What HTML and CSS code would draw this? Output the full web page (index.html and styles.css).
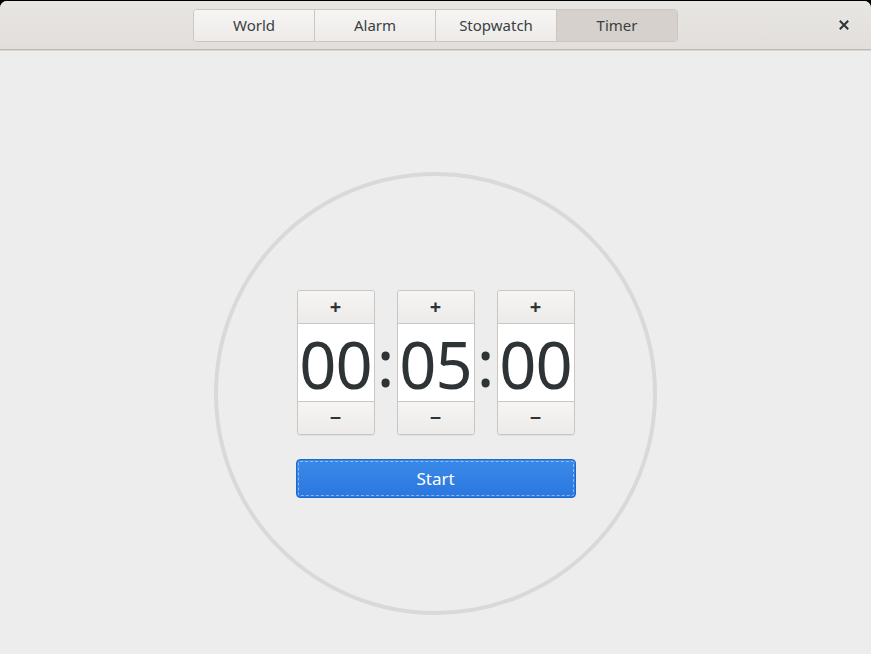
FILE: index.html
```html
<!DOCTYPE html>
<html lang="en">
<head>
  <meta charset="UTF-8" />
  <meta name="viewport" content="width=device-width, initial-scale=1.0"/>
  <title>Clocks - Timer</title>
  <link rel="stylesheet" href="styles.css">
</head>
<body>
  <div class="window">
    <header class="headerbar">
      <div></div>
      <nav class="tabs">
        <a class="tab" href="#world">World</a>
        <a class="tab" href="#alarm">Alarm</a>
        <a class="tab" href="#stopwatch">Stopwatch</a>
        <a class="tab active" href="#timer">Timer</a>
      </nav>
      <div class="close-wrap">
        <button class="close" aria-label="Close">
          <svg width="10" height="10" viewBox="0 0 10 10">
            <path d="M1.5 1.5 L8.5 8.5 M8.5 1.5 L1.5 8.5" stroke="#2e3436" stroke-width="2" stroke-linecap="square"/>
          </svg>
        </button>
      </div>
    </header>

    <main class="content">
      <div class="ring">
        <div class="time">
          <div class="spin">
            <button class="spin-btn up">+</button>
            <div class="spin-value"><span>00</span></div>
            <button class="spin-btn down">&minus;</button>
          </div>
          <span class="colon">:</span>
          <div class="spin">
            <button class="spin-btn up">+</button>
            <div class="spin-value"><span>05</span></div>
            <button class="spin-btn down">&minus;</button>
          </div>
          <span class="colon">:</span>
          <div class="spin">
            <button class="spin-btn up">+</button>
            <div class="spin-value"><span>00</span></div>
            <button class="spin-btn down">&minus;</button>
          </div>
        </div>
        <button class="start">Start</button>
      </div>
    </main>
  </div>
</body>
</html>
```

FILE: styles.css
```css
html, body {
  margin: 0;
  padding: 0;
  height: 100%;
  background: #000;
}

body {
  font-family: "Noto Sans", "Open Sans", sans-serif;
  color: #2e3436;
}

.window {
  height: 653px;
  margin-top: 1px;
  background: #ededed;
  border-radius: 7px 7px 0 0;
  overflow: hidden;
  display: flex;
  flex-direction: column;
}

.headerbar {
  height: 48px;
  background: linear-gradient(#e8e6e3, #e1dedb);
  border-bottom: 1px solid #bfb8b1;
  box-shadow: 0 1px 0 #d8d6d3;
  display: grid;
  grid-template-columns: 1fr auto 1fr;
  align-items: center;
}

.tabs {
  display: flex;
  border: 1px solid #cdc7c2;
  border-radius: 4px;
  overflow: hidden;
  margin-top: 1px;
}

.tab {
  width: 120px;
  height: 31px;
  line-height: 31px;
  text-align: center;
  font-size: 15px;
  color: #3a3f41;
  text-decoration: none;
  background: linear-gradient(#f6f5f4, #edebe9);
  border-left: 1px solid #cdc7c2;
}

.tab:first-child {
  border-left: none;
}

.tab.active {
  background: #d6d1cd;
}

.close-wrap {
  display: flex;
  justify-content: flex-end;
  padding-right: 19px;
}

.close {
  width: 16px;
  height: 16px;
  padding: 0;
  border: none;
  background: none;
  display: flex;
  align-items: center;
  justify-content: center;
}

.content {
  flex: 1;
  display: flex;
  justify-content: center;
  padding-top: 122px;
}

.ring {
  width: 435px;
  height: 435px;
  border: 4px solid #d9d9d9;
  border-radius: 50%;
  display: flex;
  flex-direction: column;
  align-items: center;
  justify-content: center;
  gap: 24px;
}

.time {
  display: flex;
  align-items: stretch;
}

.spin {
  width: 76px;
  border: 1px solid #c9c5c1;
  border-radius: 3px;
  display: flex;
  flex-direction: column;
  overflow: hidden;
  box-shadow: 0 1px 0 rgba(0, 0, 0, 0.05);
}

.spin-btn {
  height: 33px;
  border: none;
  padding: 0;
  background: linear-gradient(#f6f5f4, #edebe9);
  font-family: inherit;
  font-size: 20px;
  line-height: 20px;
  font-weight: bold;
  color: #2e3436;
}

.spin-btn.up {
  border-bottom: 1px solid #cdc7c2;
}

.spin-btn.down {
  border-top: 1px solid #cdc7c2;
}

.spin-value {
  height: 77px;
  background: #fff;
  display: flex;
  align-items: center;
  justify-content: center;
  overflow: hidden;
}

.spin-value span {
  font-size: 65px;
  line-height: 60px;
  letter-spacing: -1px;
  padding-top: 4px;
}

.colon {
  width: 22px;
  font-size: 66px;
  line-height: 1;
  text-align: center;
  display: flex;
  align-items: center;
  justify-content: center;
  padding-bottom: 2px;
}

.start {
  width: 280px;
  height: 39px;
  border: 1px solid #1b6acb;
  border-radius: 4px;
  background: linear-gradient(#3a89e8, #2a78e0);
  color: #fff;
  font-family: inherit;
  font-size: 17px;
  outline: 1px dashed rgba(255, 255, 255, 0.45);
  outline-offset: -3px;
}
```
